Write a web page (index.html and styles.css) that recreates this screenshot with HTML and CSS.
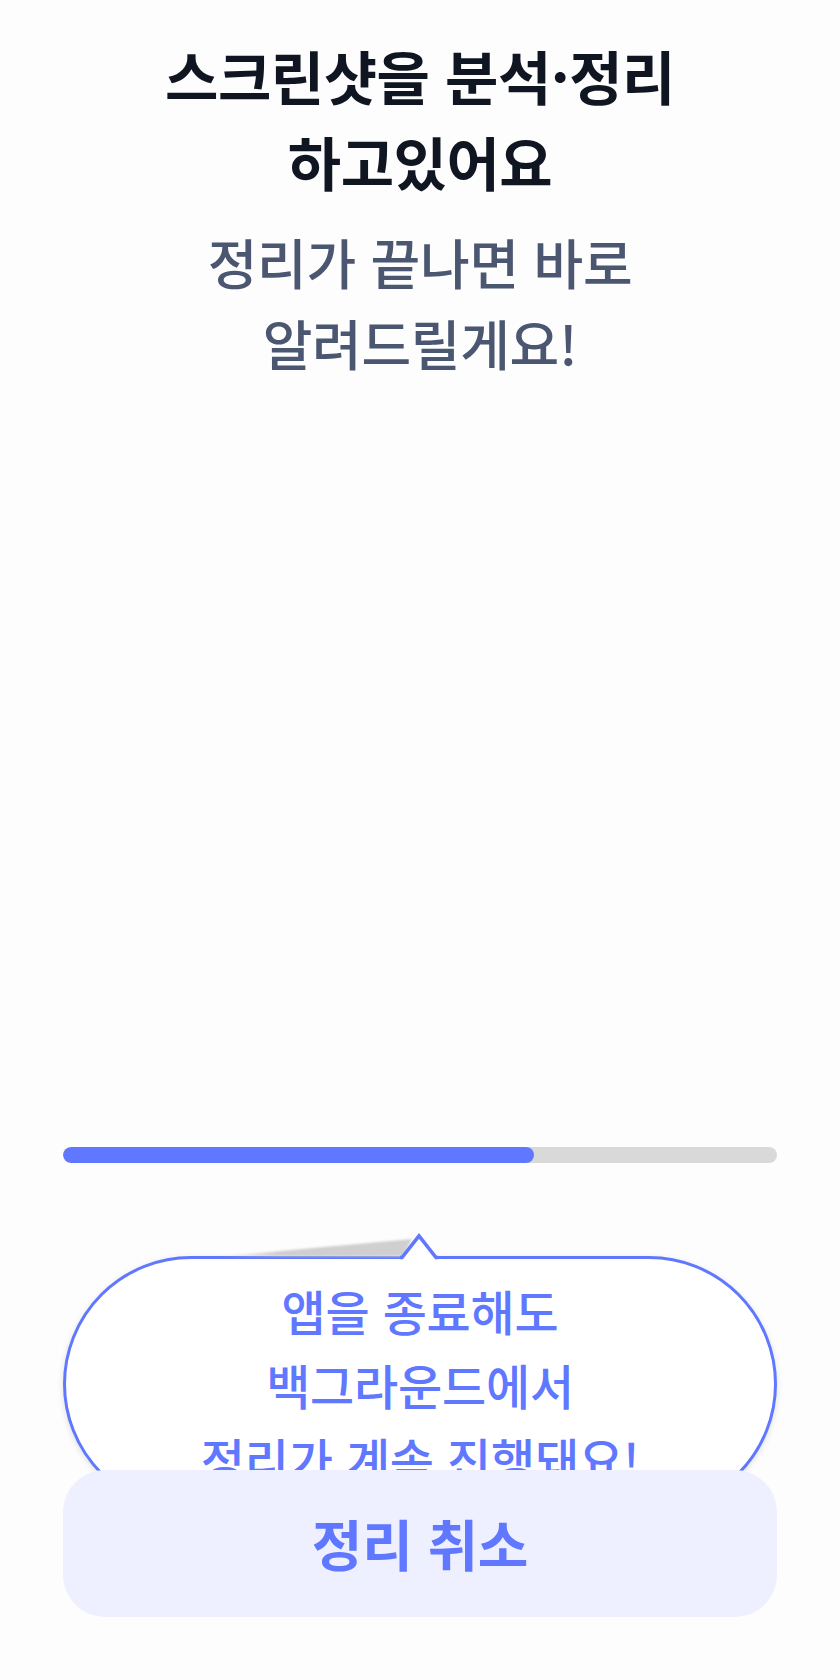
FILE: index.html
```html
<!DOCTYPE html>
<html lang="ko">
<head>
<meta charset="utf-8">
<title>정리 중</title>
<link rel="stylesheet" href="styles.css">
</head>
<body>
<main class="page">
  <h1 class="title">스크린샷을 분석·정리<br>하고있어요</h1>
  <p class="subtitle">정리가 끝나면 바로<br>알려드릴게요!</p>

  <div class="progress">
    <div class="progress-fill" style="width: 66%"></div>
  </div>

  <div class="bubble">
    <svg class="bubble-tail" width="240" height="28" viewBox="0 0 240 28" aria-hidden="true">
      <defs>
        <linearGradient id="wedge" x1="0" y1="0" x2="1" y2="0">
          <stop offset="0" stop-color="#c8c8c8" stop-opacity="0"/>
          <stop offset="0.3" stop-color="#c4c4c4" stop-opacity="0.8"/>
          <stop offset="1" stop-color="#d0d0d0" stop-opacity="1"/>
        </linearGradient>
        <filter id="soft" x="-10%" y="-50%" width="120%" height="200%">
          <feGaussianBlur stdDeviation="1.2"/>
        </filter>
      </defs>
      <polygon points="20,23.5 204,23.5 213,6" fill="url(#wedge)" filter="url(#soft)"/>
      <polygon points="203,24.5 220,2.5 237,24.5 237,27.5 203,27.5" fill="#ffffff"/>
      <polyline points="201,24.5 203,24.5 220,3 237,24.5 239,24.5" fill="none" stroke="#6077ff" stroke-width="3.6" stroke-linejoin="miter"/>
    </svg>
    <p class="bubble-text">앱을 종료해도<br>백그라운드에서<br>정리가 계속 진행돼요!</p>
  </div>
</main>

<button class="cancel-button" type="button">정리 취소</button>
</body>
</html>
```

FILE: styles.css
```css
* {
  box-sizing: border-box;
}

html, body {
  margin: 0;
  padding: 0;
}

body {
  background: #fdfdfd;
  width: 840px;
  height: 1680px;
  overflow: hidden;
  font-family: "Noto Sans CJK KR", "Noto Sans", sans-serif;
}

.page {
  display: flex;
  flex-direction: column;
  padding: 32px 63px 0;
}

.title {
  margin: 0;
  text-align: center;
  font-size: 58px;
  line-height: 86px;
  font-weight: 700;
  color: #0f1521;
  letter-spacing: -0.5px;
}

.subtitle {
  margin: 17px 0 0;
  text-align: center;
  font-size: 54px;
  line-height: 81px;
  font-weight: 500;
  color: #4b5670;
  letter-spacing: -0.3px;
}

.progress {
  margin-top: 764px;
  height: 16px;
  border-radius: 8px;
  background: #d9d9d9;
  overflow: hidden;
}

.progress-fill {
  height: 100%;
  border-radius: 8px;
  background: #6077ff;
}

.bubble {
  position: relative;
  margin-top: 93px;
  height: 256px;
  border: 3.5px solid #6077ff;
  border-radius: 128px;
  background: #ffffff;
  box-shadow: 0 2px 6px rgba(0, 0, 0, 0.12);
  padding-top: 14px;
}

.bubble-tail {
  position: absolute;
  top: -26.5px;
  left: 132.5px;
  display: block;
}

.bubble-text {
  margin: 0;
  text-align: center;
  font-size: 48px;
  line-height: 74px;
  font-weight: 500;
  color: #6077ff;
  letter-spacing: -0.2px;
}

.cancel-button {
  position: fixed;
  left: 63px;
  right: 63px;
  bottom: 63px;
  height: 147px;
  border: none;
  border-radius: 42px;
  background: #eef0ff;
  color: #6077ff;
  font-family: "Noto Sans CJK KR", "Noto Sans", sans-serif;
  font-size: 55px;
  font-weight: 700;
  letter-spacing: -0.3px;
  display: flex;
  align-items: center;
  justify-content: center;
  padding: 0 0 4px;
}
```
